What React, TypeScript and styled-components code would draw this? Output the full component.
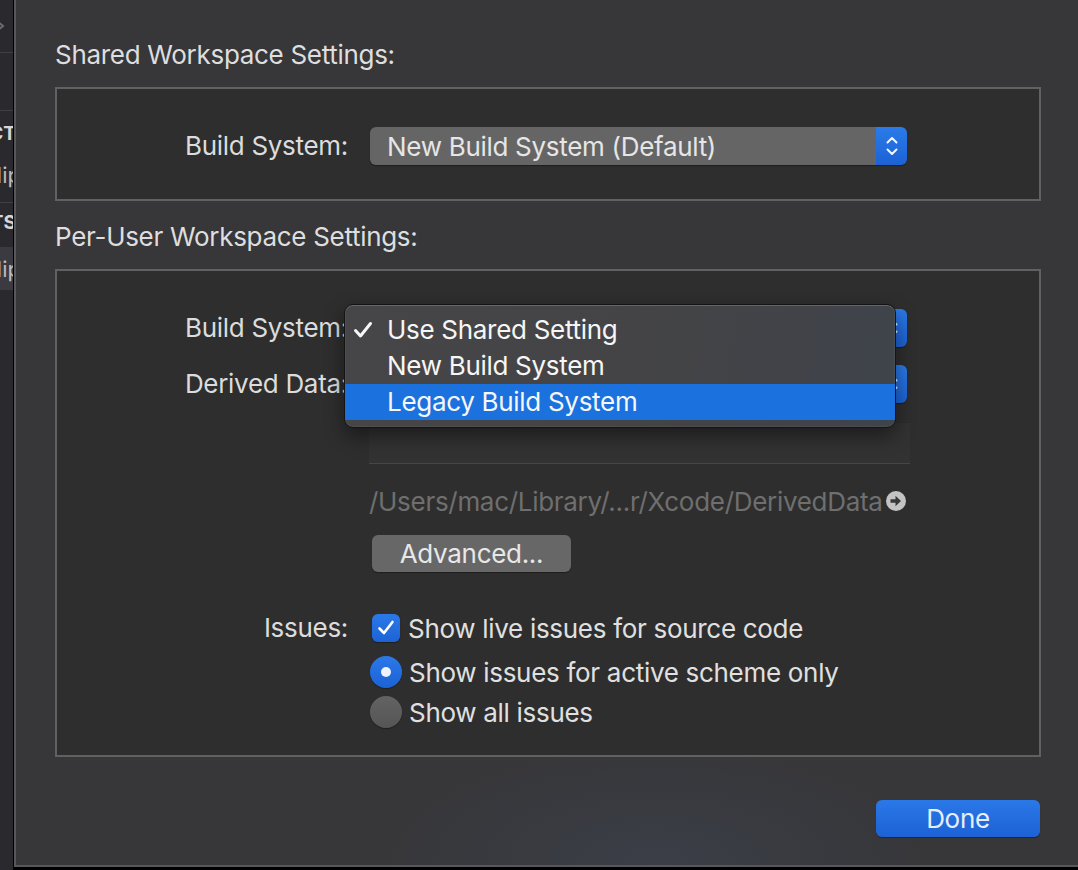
import React from 'react';
import styled, { createGlobalStyle } from 'styled-components';

const GlobalStyle = createGlobalStyle`
  html, body { margin: 0; padding: 0; background: #000; }
  body {
    font-family: Inter, "Noto Sans", "Liberation Sans", sans-serif;
    -webkit-font-smoothing: antialiased;
  }
  * { box-sizing: border-box; }
`;

const Page = styled.div`
  display: flex;
  width: 1078px;
  height: 870px;
  background: #000;
  overflow: hidden;
`;

/* ---------- left sidebar slice ---------- */
const Sidebar = styled.aside`
  width: 13px;
  flex: none;
  height: 870px;
  background: #2a292e;
  display: flex;
  flex-direction: column;
  overflow: hidden;
`;

const SideRow = styled.div<{ $h: number; $selected?: boolean; $start?: boolean }>`
  height: ${(p) => p.$h}px;
  flex: none;
  display: flex;
  align-items: center;
  justify-content: ${(p) => (p.$start ? 'flex-start' : 'flex-end')};
  background: ${(p) => (p.$selected ? '#3b3a40' : 'transparent')};
  white-space: nowrap;
`;

const SideDivider = styled.div`
  height: 1px;
  flex: none;
  background: #403f45;
`;

const SideHeader = styled.span`
  flex: none;
  font-weight: 700;
  font-size: 19px;
  color: #d6d6d6;
  margin-right: -3px;
`;

const SideItem = styled.span`
  flex: none;
  font-size: 22px;
  color: #bcbcbc;
  margin-right: -8px;
`;

const SideChevron = styled.svg`
  flex: none;
  margin-left: -5px;
`;

/* ---------- sheet ---------- */
const Sheet = styled.main`
  margin-left: 1px;
  flex: 1;
  height: 867px;
  border-left: 2px solid #58585b;
  border-bottom: 2px solid #58585b;
  background:
    radial-gradient(ellipse 360px 150px at 640px 860px, rgba(80, 100, 140, 0.16), transparent 75%),
    #37373a;
  padding: 39px 37px 0 39px;
  display: flex;
  flex-direction: column;
  color: #dcdcdc;
  font-size: 26px;
  letter-spacing: -0.3px;
`;

const SectionTitle = styled.h2<{ $mt?: number }>`
  margin: ${(p) => p.$mt ?? 0}px 0 0 0;
  font-size: 26px;
  font-weight: 400;
  line-height: 32px;
  color: #dedede;
`;

const GroupBox = styled.section<{ $pt: number; $pb: number }>`
  margin-top: 16px;
  border: 2px solid #616161;
  background: #2e2e2e;
  padding: ${(p) => p.$pt}px 0 ${(p) => p.$pb}px 0;
  display: flex;
  flex-direction: column;
`;

const FormRow = styled.div<{ $mt?: number; $h?: number }>`
  display: grid;
  grid-template-columns: 291px 541px;
  column-gap: 22px;
  align-items: center;
  margin-top: ${(p) => p.$mt ?? 0}px;
  height: ${(p) => (p.$h ? `${p.$h}px` : 'auto')};
`;

const Label = styled.div`
  text-align: right;
  color: #dcdcdc;
  line-height: 32px;
  white-space: nowrap;
`;

const Control = styled.div`
  position: relative;
  display: flex;
  align-items: center;
`;

/* popup button */
const Popup = styled.div`
  display: flex;
  width: 537px;
  height: 38px;
  border-radius: 6px;
  overflow: hidden;
  box-shadow: 0 1px 1px rgba(0, 0, 0, 0.35);
`;

const PopupBody = styled.div`
  flex: 1;
  background: #656565;
  color: #e6e6e6;
  padding-left: 17px;
  display: flex;
  align-items: center;
  white-space: nowrap;
`;

const Stepper = styled.div`
  width: 31px;
  flex: none;
  background: linear-gradient(#2b7be9, #1c62d4);
  display: flex;
  align-items: center;
  justify-content: center;
`;

/* menu */
const Menu = styled.div`
  position: absolute;
  left: -26px;
  top: -5px;
  width: 552px;
  padding: 7px 0;
  border-radius: 9px;
  background: linear-gradient(100deg, #464648 0%, #444446 55%, #3f434b 100%);
  border: 1px solid #141414;
  box-shadow:
    inset 0 1px 0 rgba(255, 255, 255, 0.14),
    inset 0 0 0 1px rgba(255, 255, 255, 0.05),
    0 8px 20px rgba(0, 0, 0, 0.45);
  z-index: 2;
  overflow: hidden;
`;

const MenuItem = styled.div<{ $active?: boolean }>`
  position: relative;
  height: 36px;
  display: flex;
  align-items: center;
  padding-left: 42px;
  padding-bottom: 1px;
  color: #f6f6f6;
  background: ${(p) => (p.$active ? '#1b72df' : 'transparent')};
  white-space: nowrap;
`;

const MenuCheck = styled.svg`
  position: absolute;
  left: 8px;
  top: 9px;
`;

/* field + path */
const PathField = styled.div`
  width: 541px;
  height: 42px;
  margin-left: -1px;
  background: #323232;
  border-top: 1px solid #2c2c2c;
  border-bottom: 1px solid #464646;
`;

const PathRow = styled.div`
  width: 537px;
  height: 30px;
  margin-left: -1px;
  display: flex;
  align-items: center;
  justify-content: space-between;
`;

const PathText = styled.span`
  color: #6f6f6f;
  white-space: nowrap;
`;

const Button = styled.button<{ $primary?: boolean; $w: number }>`
  width: ${(p) => p.$w}px;
  height: 37px;
  border: none;
  border-radius: 6px;
  font: inherit;
  letter-spacing: inherit;
  color: ${(p) => (p.$primary ? '#e7eefb' : '#e8e8e8')};
  background: ${(p) => (p.$primary ? 'linear-gradient(#2b78e8, #1c62d5)' : '#676767')};
  box-shadow: 0 1px 1px rgba(0, 0, 0, 0.35);
  padding: 0;
  display: flex;
  align-items: center;
  justify-content: center;
`;

const AdvancedWrap = styled.div`
  margin-left: 2px;
`;

/* options */
const Option = styled.div<{ $gap: number }>`
  display: flex;
  align-items: center;
  gap: ${(p) => p.$gap}px;
  white-space: nowrap;
  color: #e0e0e0;
`;

const Checkbox = styled.span`
  width: 28px;
  height: 28px;
  margin-left: 2px;
  border-radius: 6px;
  background: linear-gradient(#2b79e9, #1d63d6);
  display: flex;
  align-items: center;
  justify-content: center;
  box-shadow: 0 1px 1px rgba(0, 0, 0, 0.35);
`;

const Radio = styled.span<{ $on?: boolean }>`
  width: 32px;
  height: 32px;
  border-radius: 50%;
  flex: none;
  background: ${(p) => (p.$on ? 'linear-gradient(#2b79e9, #1c62d4)' : 'linear-gradient(#636363, #555555)')};
  display: flex;
  align-items: center;
  justify-content: center;
  box-shadow: 0 1px 1px rgba(0, 0, 0, 0.35);
`;

const RadioDot = styled.span`
  width: 10px;
  height: 10px;
  border-radius: 50%;
  background: #eef2fa;
`;

const Footer = styled.div`
  margin-top: 43px;
  display: flex;
  justify-content: flex-end;
  padding-right: 1px;
`;

/* ---------- icons ---------- */
const StepperIcon = () => (
  <svg width="14" height="26" viewBox="0 0 14 26" fill="none">
    <path d="M2.5 9.5 L7 5 L11.5 9.5" stroke="#f2f6ff" strokeWidth="2" strokeLinecap="round" strokeLinejoin="round" />
    <path d="M2.5 16.5 L7 21 L11.5 16.5" stroke="#f2f6ff" strokeWidth="2" strokeLinecap="round" strokeLinejoin="round" />
  </svg>
);

const ArrowCircle = () => (
  <svg width="20" height="20" viewBox="0 0 20 20">
    <circle cx="10" cy="10" r="10" fill="#c4c4c4" />
    <path d="M4.5 8.3 H9.5 V4.8 L15 10 L9.5 15.2 V11.7 H4.5 Z" fill="#383838" />
  </svg>
);

const CheckGlyph = ({ size, color }: { size: number; color: string }) => (
  <svg width={size} height={size} viewBox="0 0 20 20" fill="none">
    <path d="M3.5 10.5 L8 15 L16.5 4" stroke={color} strokeWidth="2.6" strokeLinecap="round" strokeLinejoin="round" />
  </svg>
);

type PopupProps = { value?: string };
const PopupButton = ({ value }: PopupProps) => (
  <Popup>
    <PopupBody>{value}</PopupBody>
    <Stepper>
      <StepperIcon />
    </Stepper>
  </Popup>
);

const menuItems = [
  { label: 'Use Shared Setting', checked: true, active: false },
  { label: 'New Build System', checked: false, active: false },
  { label: 'Legacy Build System', checked: false, active: true },
];

export default function App() {
  return (
    <>
      <GlobalStyle />
      <Page>
        <Sidebar>
          <SideRow $h={52} $start>
            <SideChevron width="10" height="14" viewBox="0 0 10 14" fill="none">
              <path d="M2 2 L8 7 L2 12" stroke="#6c6c70" strokeWidth="2" strokeLinecap="round" />
            </SideChevron>
          </SideRow>
          <SideDivider />
          <SideRow $h={57} />
          <SideDivider />
          <SideRow $h={44}>
            <SideHeader>PROJECT</SideHeader>
          </SideRow>
          <SideRow $h={40}>
            <SideItem>Clip</SideItem>
          </SideRow>
          <SideRow $h={7} />
          <SideDivider />
          <SideRow $h={38}>
            <SideHeader>TARGETS</SideHeader>
          </SideRow>
          <SideRow $h={6} />
          <SideRow $h={43} $selected>
            <SideItem>Clip</SideItem>
          </SideRow>
        </Sidebar>

        <Sheet>
          <SectionTitle>Shared Workspace Settings:</SectionTitle>
          <GroupBox $pt={38} $pb={34}>
            <FormRow>
              <Label>Build System:</Label>
              <Control>
                <PopupButton value="New Build System (Default)" />
              </Control>
            </FormRow>
          </GroupBox>

          <SectionTitle $mt={20}>Per-User Workspace Settings:</SectionTitle>
          <GroupBox $pt={38} $pb={23}>
            <FormRow>
              <Label>Build System:</Label>
              <Control>
                <PopupButton />
                <Menu>
                  {menuItems.map((m) => (
                    <MenuItem key={m.label} $active={m.active}>
                      {m.checked && (
                        <MenuCheck width="20" height="18" viewBox="0 0 20 18" fill="none">
                          <path d="M2.5 9.5 L7.5 15 L17.5 2.5" stroke="#f6f6f6" strokeWidth="3" strokeLinecap="round" strokeLinejoin="round" />
                        </MenuCheck>
                      )}
                      {m.label}
                    </MenuItem>
                  ))}
                </Menu>
              </Control>
            </FormRow>

            <FormRow $mt={18}>
              <Label>Derived Data:</Label>
              <Control>
                <PopupButton />
              </Control>
            </FormRow>

            <FormRow $mt={19}>
              <Label />
              <Control>
                <PathField />
              </Control>
            </FormRow>

            <FormRow $mt={22} $h={30}>
              <Label />
              <Control>
                <PathRow>
                  <PathText>/Users/mac/Library/...r/Xcode/DerivedData</PathText>
                  <ArrowCircle />
                </PathRow>
              </Control>
            </FormRow>

            <FormRow $mt={19}>
              <Label />
              <Control>
                <AdvancedWrap>
                  <Button $w={199}>Advanced...</Button>
                </AdvancedWrap>
              </Control>
            </FormRow>

            <FormRow $mt={38} $h={36}>
              <Label>Issues:</Label>
              <Control>
                <Option $gap={8}>
                  <Checkbox>
                    <CheckGlyph size={20} color="#ffffff" />
                  </Checkbox>
                  Show live issues for source code
                </Option>
              </Control>
            </FormRow>

            <FormRow $mt={6} $h={40}>
              <Label />
              <Control>
                <Option $gap={7}>
                  <Radio $on>
                    <RadioDot />
                  </Radio>
                  Show issues for active scheme only
                </Option>
              </Control>
            </FormRow>

            <FormRow $h={40}>
              <Label />
              <Control>
                <Option $gap={7}>
                  <Radio />
                  Show all issues
                </Option>
              </Control>
            </FormRow>
          </GroupBox>

          <Footer>
            <Button $primary $w={164}>Done</Button>
          </Footer>
        </Sheet>
      </Page>
    </>
  );
}
